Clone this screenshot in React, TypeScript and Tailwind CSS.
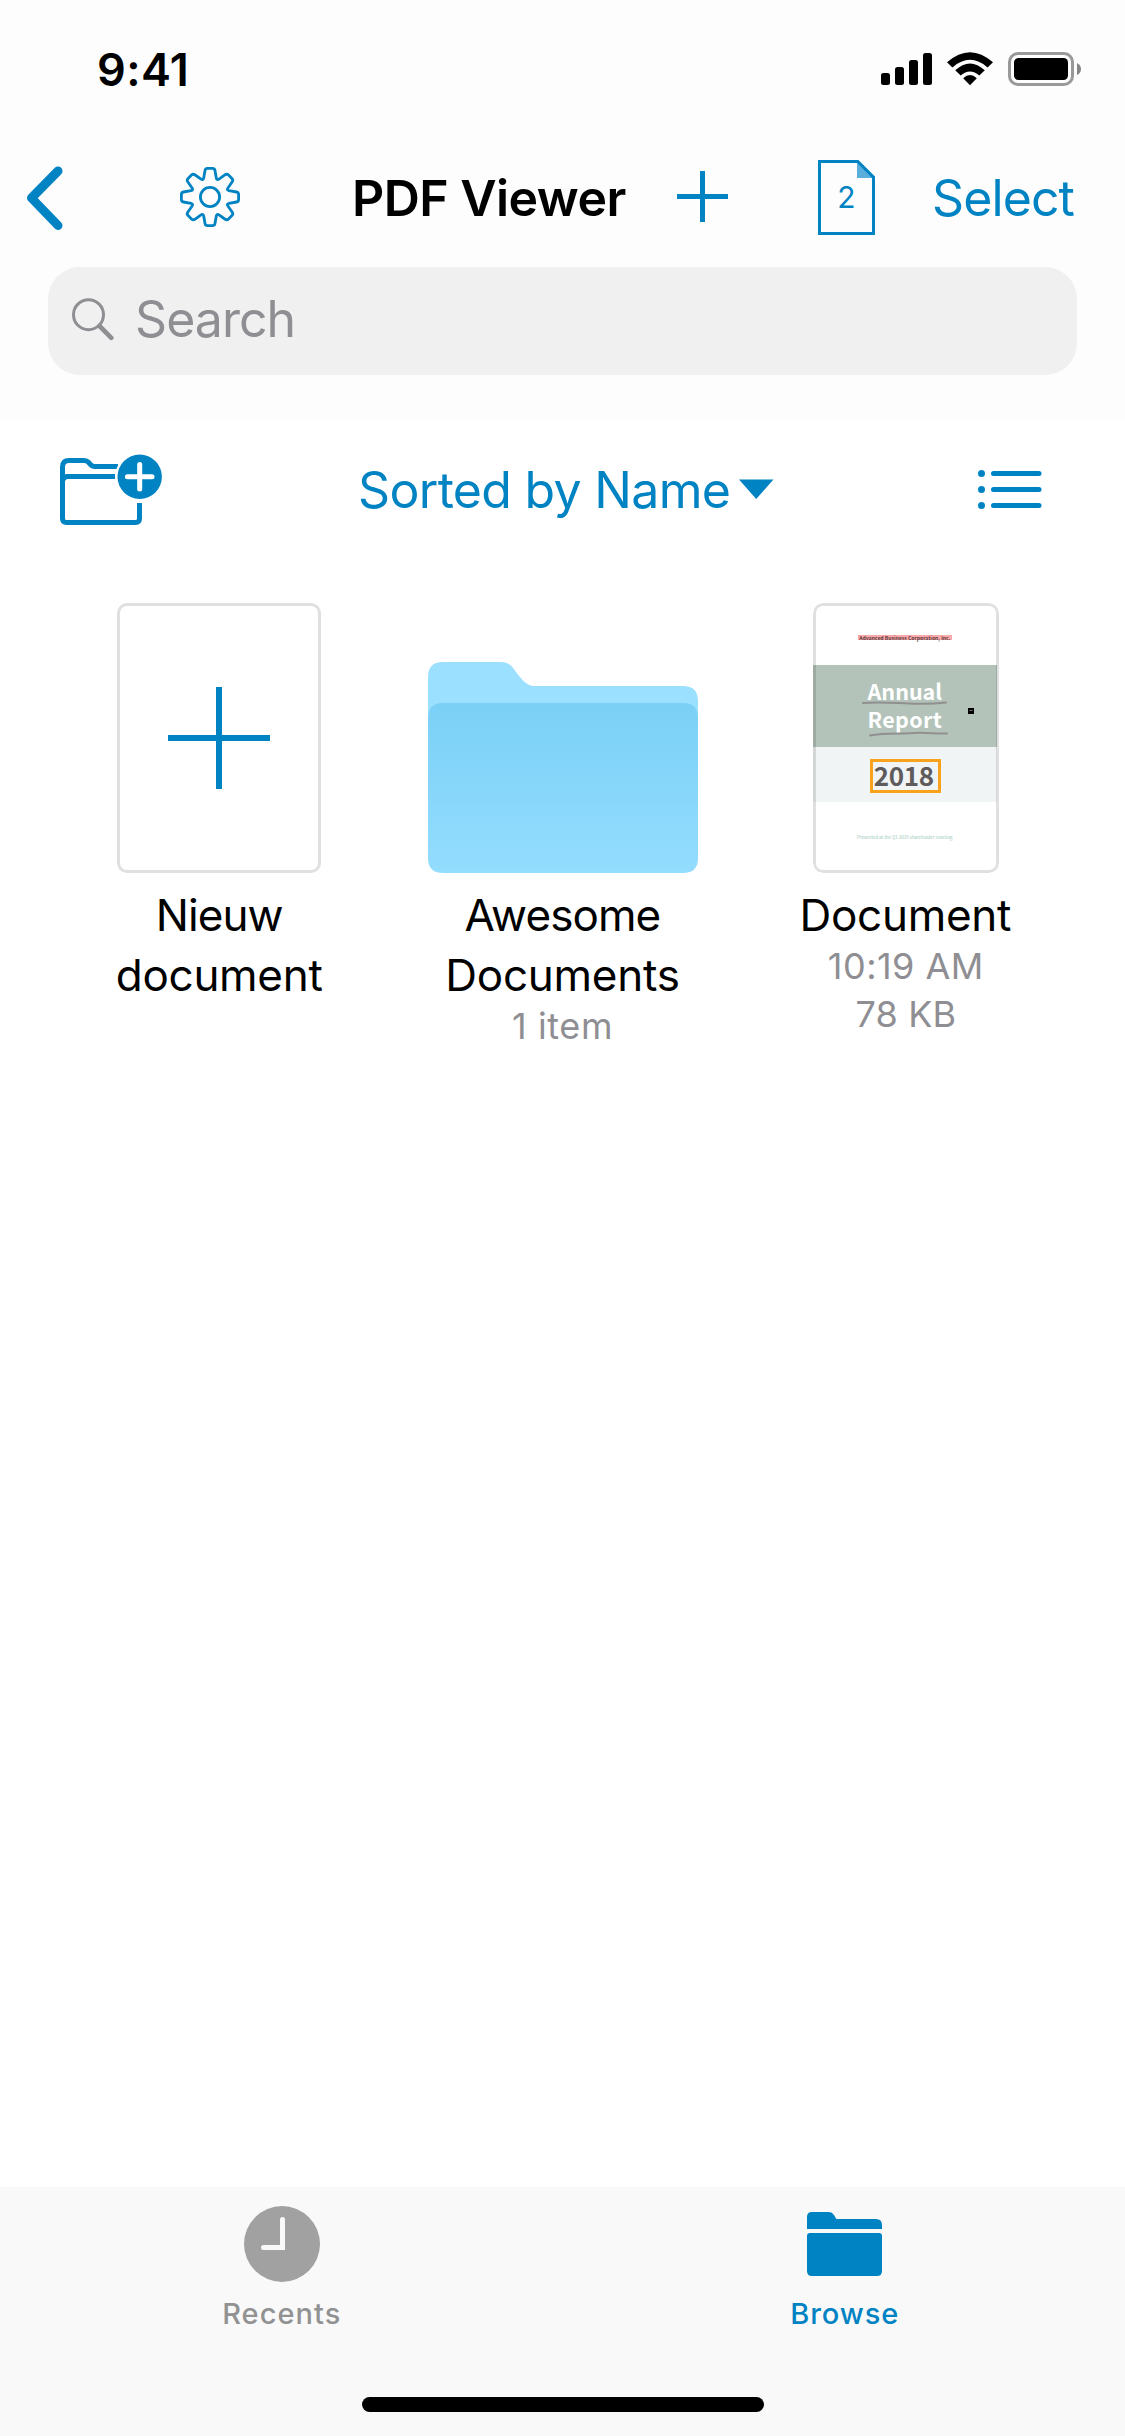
import type { ReactNode } from 'react';

const BLUE = '#0083c3';

function gearPath() {
  const parts: string[] = [];
  for (let k = 0; k < 8; k++) {
    const a = (k * Math.PI) / 4;
    const p = (x: number, y: number) =>
      `${(30 + x * Math.cos(a) - y * Math.sin(a)).toFixed(2)} ${(30 + x * Math.sin(a) + y * Math.cos(a)).toFixed(2)}`;
    parts.push(
      `${k === 0 ? 'M' : 'L'}${p(-6.3, -19)}`,
      `L${p(-5, -26.5)}`,
      `Q${p(-4.6, -28.6)} ${p(-2.4, -28.6)}`,
      `L${p(2.4, -28.6)}`,
      `Q${p(4.6, -28.6)} ${p(5, -26.5)}`,
      `L${p(6.3, -19)}`,
      `Q${p(6.8, -16.4)} ${p(9, -17.9)}`,
    );
  }
  return parts.join(' ') + 'Z';
}

function StatusIcons() {
  return (
    <svg className="ml-[692px] shrink-0" width="201" height="34" viewBox="0 0 201 34">
      <rect x="1" y="21" width="9" height="12" rx="2.5" />
      <rect x="15" y="15" width="9" height="18" rx="2.5" />
      <rect x="29" y="8" width="9" height="25" rx="2.5" />
      <rect x="43" y="1" width="9" height="32" rx="2.5" />
      <g>
        <path d="M67 10.3Q90 -10 113 10.3L107.6 15.4Q90 0.3 72.4 15.4Z" />
        <path d="M75.2 18.3Q90 4.5 104.8 18.3L99.3 23.5Q90 15.5 80.7 23.5Z" />
        <path d="M83.2 26.2Q90 19.8 96.8 26.2L90 33.3Z" />
      </g>
      <rect x="129.5" y="1.5" width="63" height="31" rx="8.5" fill="none" stroke="#999" strokeWidth="3" />
      <rect x="134" y="6" width="54" height="22" rx="4.5" />
      <path d="M197 11Q201 13 201 17T197 23Z" fill="#868686" />
    </svg>
  );
}

function StatusBar() {
  return (
    <div className="h-[132px] pt-[50px]">
      <div className="flex h-[38px] items-center pl-[97px]">
        <span className="w-[91px] text-[45px] leading-none font-semibold tracking-[0.4px] whitespace-nowrap">9:41</span>
        <StatusIcons />
      </div>
    </div>
  );
}

function NavBar() {
  return (
    <div className="flex h-[132px] items-center pl-[26px] text-[50px] leading-none text-[#0083c3]">
      <svg className="shrink-0" width="37" height="64" viewBox="0 0 37 64" fill="none" stroke={BLUE} strokeWidth="9" strokeLinecap="round" strokeLinejoin="round">
        <path d="M32 5L5.5 32L32 59.5" />
      </svg>
      <svg className="-mt-[2px] ml-[117px] shrink-0" width="60" height="60" viewBox="0 0 60 60" fill="none" stroke={BLUE} strokeWidth="2.8" strokeLinejoin="round">
        <path d={gearPath()} />
        <circle cx="30" cy="30" r="9.6" />
      </svg>
      <h1 className="ml-[112px] w-[273px] font-semibold tracking-[-0.55px] whitespace-nowrap text-black">PDF Viewer</h1>
      <svg className="-mt-[3px] ml-[52px] shrink-0" width="51" height="51" viewBox="0 0 51 51" fill={BLUE}>
        <rect x="23" width="5" height="51" />
        <rect y="23" width="51" height="5" />
      </svg>
      <div className="relative -mt-[2px] ml-[90px] flex h-[75px] w-[57px] shrink-0 items-center justify-center">
        <svg className="absolute inset-0" width="57" height="75" viewBox="0 0 57 75">
          <path d="M39 0V18H57Z" fill="#5aaedb" />
          <path d="M1.5 1.5H39.8L55.5 17.2V73.5H1.5Z" fill="none" stroke={BLUE} strokeWidth="3" />
        </svg>
        <span className="relative text-[30px]">2</span>
      </div>
      <span className="ml-[57px] tracking-[-0.9px] whitespace-nowrap">Select</span>
    </div>
  );
}

function SearchField() {
  return (
    <div className="mx-12 mt-[3px] flex h-[108px] items-center rounded-[32px] bg-[#f0f0f0] pb-1 pl-6 text-[#8e8e93]">
      <svg width="43" height="43" viewBox="0 0 43 43" fill="none" stroke="#8e8e93">
        <circle cx="16.5" cy="16.7" r="15" strokeWidth="3" />
        <path d="M27.5 28L39.3 39.8" strokeWidth="4.6" strokeLinecap="round" />
      </svg>
      <span className="ml-[20px] text-[50px] leading-none tracking-[-0.95px]">Search</span>
    </div>
  );
}

function SortBar() {
  return (
    <div className="flex h-[142px] items-center pl-[60px] text-[#0083c3]">
      <svg className="shrink-0" width="103" height="72" viewBox="0 0 103 72" fill="none" stroke={BLUE} strokeWidth="5">
        <path d="M58 12.5H35Q32 12.5 30.5 10.5L28.5 8.3Q26.8 6.5 24 6.5H9Q2.5 6.5 2.5 13V64.5Q2.5 68.5 6.5 68.5H75.5Q79.5 68.5 79.5 64.5V49" />
        <path d="M3 26Q4 22.5 7.5 22.5H55" />
        <circle cx="79.7" cy="22.8" r="24.5" fill="#fff" stroke="none" />
        <circle cx="79.7" cy="22.8" r="22.2" fill={BLUE} stroke="none" />
        <path d="M79.7 10.5V35.1M67.4 22.8H92" stroke="#fff" strokeLinecap="round" />
      </svg>
      <span className="ml-[195px] w-[372px] text-[50px] leading-none tracking-[-0.68px] whitespace-nowrap">Sorted by Name</span>
      <svg className="-mt-[3px] ml-[9px] shrink-0" width="35" height="20" viewBox="0 0 35 20" fill={BLUE}>
        <path d="M0 0.5H34.5L17.2 20Z" />
      </svg>
      <svg className="ml-[204px] shrink-0" width="64" height="40" viewBox="0 0 64 40" fill={BLUE}>
        {[4, 20, 36].map((y) => (
          <g key={y}>
            <circle cx="3.5" cy={y - 0.5} r="3.5" />
            <rect x="13" y={y - 3} width="50.5" height="5" rx="2.5" />
          </g>
        ))}
      </svg>
    </div>
  );
}

function NewDocument() {
  return (
    <div className="flex h-[270px] w-[204px] items-center justify-center rounded-[10px] border-[3px] border-[#e0e0e0]">
      <svg width="102" height="102" viewBox="0 0 102 102" fill={BLUE}>
        <rect x="48" width="6" height="102" />
        <rect y="48" width="102" height="6" />
      </svg>
    </div>
  );
}

function FolderThumb() {
  return (
    <svg className="mt-[59px] ml-px" width="270" height="211" viewBox="0 0 270 211">
      <defs>
        <linearGradient id="folder-front" x1="0" y1="0" x2="0" y2="1">
          <stop offset="0" stopColor="#7bd0f6" />
          <stop offset="1" stopColor="#93ddff" />
        </linearGradient>
      </defs>
      <path d="M0 15Q0 0 15 0H73C81 0 84 4.5 88 10C92 15 94 18 98 21C101 23.5 104 24 108 24H255Q270 24 270 39V120H0Z" fill="#9be1ff" />
      <path d="M0 55Q1 41 14 41H256Q269 41 270 55V196Q270 211 255 211H15Q0 211 0 196Z" fill="url(#folder-front)" />
    </svg>
  );
}

function ReportThumb() {
  return (
    <div className="relative h-[270px] w-[186px] overflow-hidden rounded-[10px] bg-white pr-[2px] font-['Noto_Sans_CJK_SC',sans-serif]">
      <div className="flex h-[62px] justify-center pt-[32px]">
        <div className="h-[5px] w-[94px] bg-[#fba9ab] text-center text-[5.1px] leading-[6px] font-bold whitespace-nowrap text-[#5d3c3e]">
          Advanced Business Corporation, Inc.
        </div>
      </div>
      <div className="relative h-[82px] bg-[#b3c3ba] pt-[11.5px] text-center text-[21.5px] leading-[28px] font-bold text-white">
        <div>Annual</div>
        <div className="tracking-[0.3px]">Report</div>
        <svg className="absolute inset-0" width="184" height="82" viewBox="0 0 184 82" fill="none" stroke="#8f908f" strokeWidth="2" strokeLinecap="round">
          <path d="M50 38C66 36.5 82 38 96 38.5S120 39 133 37.5" />
          <path d="M57 70.5C72 67.5 86 69 100 68S122 69 134 68.5" />
          <rect x="155" y="43" width="6" height="6" fill="#000" stroke="none" />
          <path d="M157 45.5H159" stroke="#777" strokeWidth="1" />
        </svg>
      </div>
      <div className="flex h-[55px] justify-center bg-[#f0f4f5] pt-[12px] pl-[2px]">
        <div className="h-[34px] w-[71px] border-[3px] border-[#f9a21b] pr-[4px] text-center text-[26px] leading-[25px] font-bold tracking-[-0.3px] text-[#5f5b5c]">
          2018
        </div>
      </div>
      <div className="pt-[33px] text-center text-[4.45px] leading-[5px] whitespace-nowrap text-[#9cc8b8]">
        Presented at the Q1 2019 shareholder meeting
      </div>
      <div className="absolute inset-0 rounded-[10px] border-[3px] border-black/12" />
    </div>
  );
}

function FileItem({ thumb, name, details }: { thumb: ReactNode; name: ReactNode; details?: ReactNode }) {
  return (
    <div className="flex flex-col items-center text-center">
      {thumb}
      <div className="mt-3 text-[44px] leading-[60px] text-black">{name}</div>
      <div className="-mt-[3px] text-[36px] leading-[48px] text-[#8e8e93]">{details}</div>
    </div>
  );
}

function TabBar() {
  return (
    <div className="flex h-[249px] flex-col bg-[#f9f9f9]">
      <div className="grid grid-cols-2 pt-[19px] text-[29px] leading-[36px] font-medium">
        <div className="flex flex-col items-center text-[#929292]">
          <svg className="ml-[2px]" width="76" height="76" viewBox="0 0 76 76">
            <circle cx="38" cy="38" r="38" fill="#a1a1a1" />
            <path d="M36 13.5Q36 11 38.5 11T41 13.5V44H19.5Q17 44 17 41.5T19.5 39H36Z" fill="#f9f9f9" />
          </svg>
          <span className="mt-[14px] ml-px tracking-[1.04px]">Recents</span>
        </div>
        <div className="flex flex-col items-center text-[#0083c3]">
          <svg className="ml-[2px]" width="75" height="76" viewBox="0 0 75 76" fill={BLUE}>
            <path d="M0 11Q0 6 5 6H22Q25 6 27 9L29 12.5Q29.5 13 30.5 13H69Q75 13 75 19V23H0Z" />
            <path d="M0 30Q0 27 3 27H72Q75 27 75 30V65Q75 70 70 70H5Q0 70 0 65Z" />
          </svg>
          <span className="mt-[14px] ml-[2px] tracking-[0.92px]">Browse</span>
        </div>
      </div>
      <div className="mx-auto mt-auto mb-6 h-[15px] w-[402px] rounded-full bg-black" />
    </div>
  );
}

export default function App() {
  return (
    <div className="flex h-[2436px] w-[1125px] flex-col bg-white font-['Inter',sans-serif] text-black">
      <header className="h-[419px] bg-[#fdfdfd]">
        <StatusBar />
        <NavBar />
        <SearchField />
      </header>
      <main className="grow">
        <SortBar />
        <div className="mx-auto mt-[42px] grid w-[1030px] grid-cols-3">
          <FileItem
            thumb={<NewDocument />}
            name={
              <>
                <div className="tracking-[-0.95px]">Nieuw</div>
                <div className="tracking-[-0.3px]">document</div>
              </>
            }
          />
          <FileItem
            thumb={<FolderThumb />}
            name={
              <>
                <div className="tracking-[-0.9px]">Awesome</div>
                <div className="tracking-[-0.25px]">Documents</div>
              </>
            }
            details={<div className="tracking-[0.62px]">1 item</div>}
          />
          <FileItem
            thumb={<ReportThumb />}
            name={<div className="-ml-px tracking-[-0.3px]">Document</div>}
            details={
              <>
                <div className="tracking-[0.48px]">10:19 AM</div>
                <div className="tracking-[0.14px]">78 KB</div>
              </>
            }
          />
        </div>
      </main>
      <TabBar />
    </div>
  );
}
